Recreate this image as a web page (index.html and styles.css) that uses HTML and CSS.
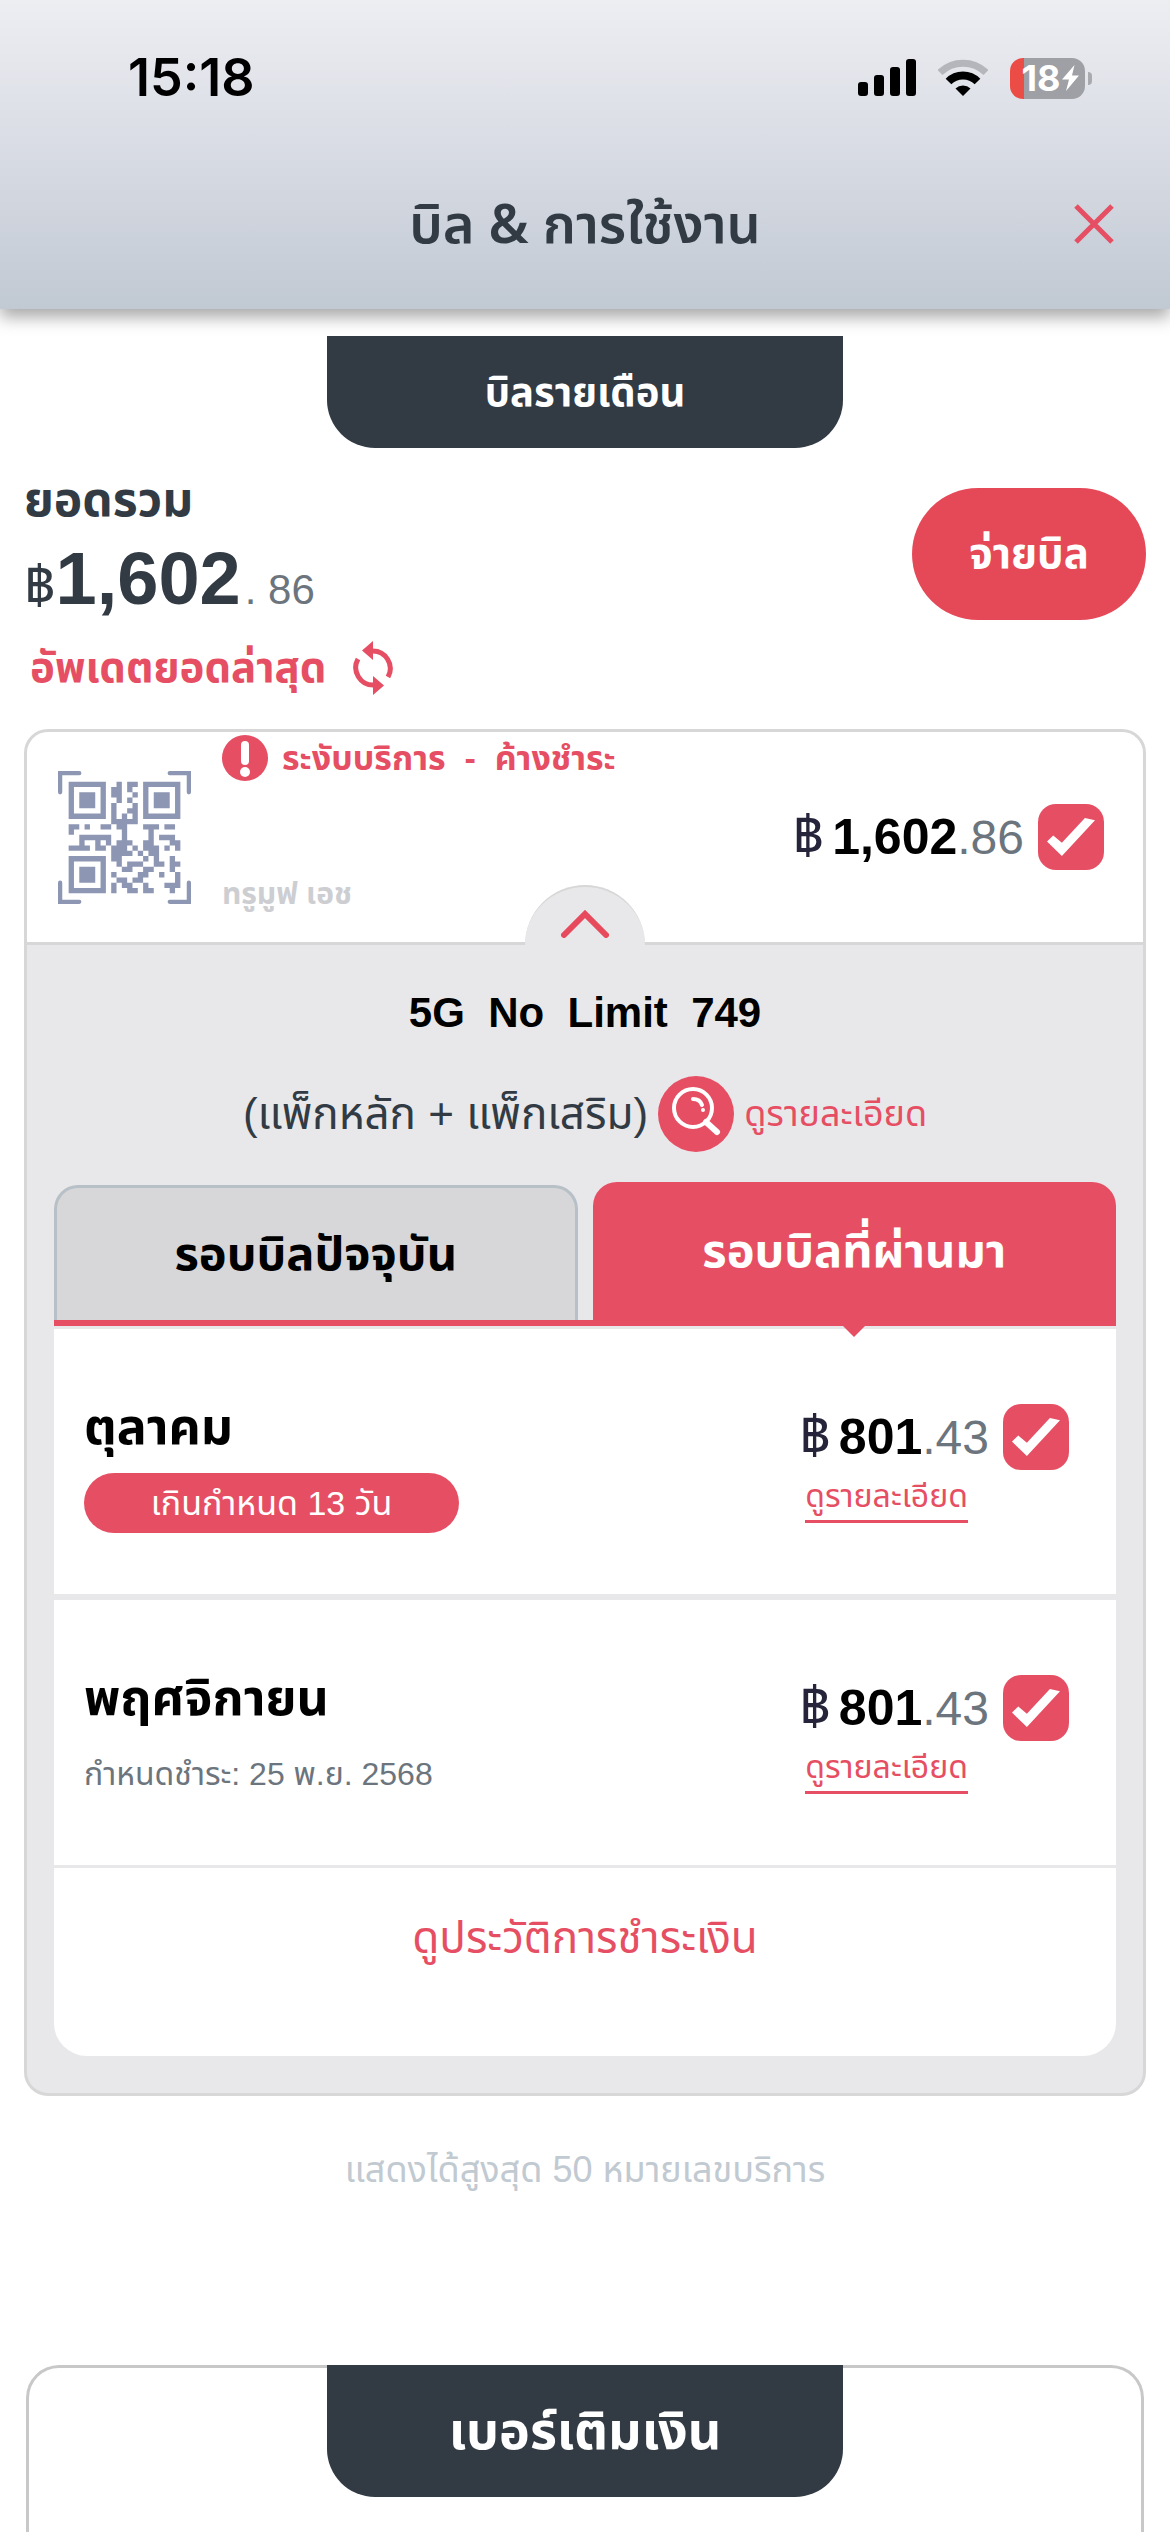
FILE: index.html
```html
<!DOCTYPE html>
<html lang="th">
<head>
<meta charset="utf-8">
<meta name="viewport" content="width=device-width, initial-scale=1">
<title>บิล &amp; การใช้งาน</title>
<link rel="stylesheet" href="styles.css">
</head>
<body>
<header class="header">
  <div class="status">
    <span class="status-time">15:18</span>
    <div class="status-icons">
      <svg width="58" height="38" viewBox="0 0 58 38" aria-hidden="true"><rect y="23" width="10" height="14" rx="3"/><rect x="16" y="16" width="10" height="21" rx="3"/><rect x="32" y="8" width="10" height="29" rx="3"/><rect x="48" width="10" height="37" rx="3"/></svg>
      <svg width="50" height="38" viewBox="0 0 50 38" fill="none" aria-hidden="true"><path d="M2 13.500a33 33 0 0 1 46 0" stroke="#b5b6bb" stroke-width="7"/><path d="M10.500 22.500a20.500 20.500 0 0 1 29 0" stroke="#000" stroke-width="8"/><path d="M17.500 29.500a11 11 0 0 1 15 0L25 37z" fill="#000"/></svg>
      <div class="battery"><span>18</span><svg width="17" height="26" viewBox="0 0 17 26" aria-hidden="true"><path d="M12.500 0 0 14.500h7L4 26 17 10.500h-7z" fill="#fff"/></svg></div>
    </div>
  </div>
  <div class="titlebar">
    <h1 class="title">บิล &amp; การใช้งาน</h1>
    <button class="close" type="button" aria-label="ปิด"><svg width="40" height="40" viewBox="0 0 40 40" aria-hidden="true"><path d="M2 2l36 36M38 2 2 38" stroke="#e64f63" stroke-width="5"/></svg></button>
  </div>
</header>

<main class="main">
  <h2 class="section-tab">บิลรายเดือน</h2>

  <section class="summary">
    <div class="summary-info">
      <div class="summary-label">ยอดรวม</div>
      <div class="summary-amount"><span class="baht">฿</span><b>1,602</b><span class="cents">. 86</span></div>
      <button class="refresh" type="button">อัพเดตยอดล่าสุด
        <svg width="42" height="54" viewBox="0 0 42 54" fill="none" aria-hidden="true"><path d="M20 10A17.500 17.500 0 0 1 36 36M6 18a17.500 17.500 0 0 0 16 26" stroke="#e64f63" stroke-width="5"/><path d="M21 0v19L10 9.500zM21 35v19l11-9.500z" fill="#e64f63"/></svg>
      </button>
    </div>
    <button class="pay" type="button">จ่ายบิล</button>
  </section>

  <section class="card">
    <div class="service">
      <svg class="qr" width="133" height="133" viewBox="0 0 25 25" fill="none" aria-label="QR">
        <path d="M.4 4V.4H4M21 .4h3.600V4M.4 21v3.600H4M21 24.600h3.600V21" stroke="#8d96b3" stroke-width=".8" stroke-linecap="round"/>
        <g transform="translate(2 2)" stroke="#8d96b3">
          <path d="M.5.5h6v6h-6zM14.500.5h6v6h-6zM.5 14.500h6v6h-6z"/>
          <path d="M2 3.500h3M16 3.500h3M2 17.500h3" stroke-width="3"/>
          <path d="M9 .5h1M11 .5h2M8 1.500h2M11 1.500h1M8 2.500h2M12 2.500h1M9 3.500h1M11 3.500h1M8 4.500h1M12 4.500h1M8 5.500h1M11 5.500h2M8 6.500h1M10 6.500h1M12 6.500h1M8 7.500h5M0 8.500h2M3 8.500h1M6 8.500h2M9 8.500h2M14 8.500h3M18 8.500h2M0 9.500h1M10 9.500h1M15 9.500h1M2 10.500h6M10 10.500h1M15 10.500h1M17 10.500h3M2 11.500h1M5 11.500h1M7 11.500h1M9 11.500h3M14 11.500h2M19 11.500h2M0 12.500h4M5 12.500h2M8 12.500h3M12 12.500h1M14 12.500h3M18 12.500h1M20 12.500h1M8 13.500h4M13 13.500h1M15 13.500h2M8 14.500h2M14 14.500h1M16 14.500h1M19 14.500h1M9 15.500h1M11 15.500h3M16 15.500h2M19 15.500h2M10 16.500h2M14 16.500h2M19 16.500h1M8 17.500h1M13 17.500h2M17 17.500h1M20 17.500h1M9 18.500h2M12 18.500h2M20 18.500h1M8 19.500h1M10 19.500h2M14 19.500h1M18 19.500h3M8 20.500h1M11 20.500h2M14 20.500h2M19 20.500h1"/>
        </g>
      </svg>
      <div class="service-info">
        <div class="alert">
          <svg width="46" height="46" viewBox="0 0 46 46" aria-hidden="true"><circle cx="23" cy="23" r="23" fill="#e64f63"/><rect x="19" y="6" width="8" height="24" rx="4" fill="#fff"/><circle cx="23" cy="37" r="5" fill="#fff"/></svg>
          <span>ระงับบริการ&nbsp; -&nbsp; ค้างชำระ</span>
        </div>
        <div class="brand">ทรูมูฟ เอช</div>
      </div>
      <label class="amount"><span class="amount-text"><span class="unit">฿</span><b>1,602</b><span class="dec">.86</span></span><input class="check" type="checkbox" checked></label>
      <button class="toggle" type="button" aria-label="ย่อ"><svg width="48" height="28" viewBox="0 0 48 28" fill="none" aria-hidden="true"><path d="M3 25 24 4l21 21" stroke="#e64a5c" stroke-width="6" stroke-linecap="round"/></svg></button>
    </div>

    <div class="detail">
      <h3 class="plan">5G&nbsp; No&nbsp; Limit&nbsp; 749</h3>
      <div class="pack">
        <span>(แพ็กหลัก + แพ็กเสริม)</span>
        <a class="pack-link" href="#pack"><svg width="76" height="76" viewBox="0 0 76 76" fill="none" aria-hidden="true"><circle cx="38" cy="38" r="38" fill="#e64f63"/><circle cx="35" cy="32" r="19" stroke="#fff" stroke-width="4"/><path d="M48 46l11 10" stroke="#fff" stroke-width="6" stroke-linecap="round"/><path d="M35 23c5 0 8 3 9 6" stroke="#fff" stroke-width="4" stroke-linecap="round"/><circle cx="45" cy="34" r="2" fill="#fff"/></svg><span>ดูรายละเอียด</span></a>
      </div>

      <div class="tabs" role="tablist">
        <button class="tab" type="button" role="tab" aria-selected="false">รอบบิลปัจจุบัน</button>
        <button class="tab tab-active" type="button" role="tab" aria-selected="true">รอบบิลที่ผ่านมา</button>
      </div>

      <ul class="bills">
        <li class="bill">
          <div class="bill-info"><h4 class="month">ตุลาคม</h4><span class="overdue">เกินกำหนด 13 วัน</span></div>
          <div class="bill-pay">
            <label class="amount"><span class="amount-text"><span class="unit">฿</span><b>801</b><span class="dec">.43</span></span><input class="check" type="checkbox" checked></label>
            <a class="more" href="#oct">ดูรายละเอียด</a>
          </div>
        </li>
        <li class="bill">
          <div class="bill-info"><h4 class="month">พฤศจิกายน</h4><span class="due">กำหนดชำระ: 25 พ.ย. 2568</span></div>
          <div class="bill-pay">
            <label class="amount"><span class="amount-text"><span class="unit">฿</span><b>801</b><span class="dec">.43</span></span><input class="check" type="checkbox" checked></label>
            <a class="more" href="#nov">ดูรายละเอียด</a>
          </div>
        </li>
      </ul>
      <a class="history" href="#history">ดูประวัติการชำระเงิน</a>
    </div>
  </section>

  <p class="note">แสดงได้สูงสุด 50 หมายเลขบริการ</p>

  <section class="prepaid">
    <h2 class="section-tab section-tab-large">เบอร์เติมเงิน</h2>
  </section>
</main>
</body>
</html>
```
FILE: styles.css
```css
:root {
  --red: #e64f63;
  --dark: #323b44;
  --grey: #6c757d;
  --panel: #e8e8ea;
  --line: #d7d7d7;
}

* { box-sizing: border-box; }

body {
  margin: 0;
  background: #fff;
  color: #000;
  font-family: "Liberation Sans", "Noto Sans Thai", sans-serif;
  font-size: 36px;
  line-height: 48px;
  overflow-x: hidden;
}

h1, h2, h3, h4, p, ul { margin: 0; padding: 0; }
ul { list-style: none; }
svg { display: block; flex: none; }
a { color: var(--red); text-decoration: none; }
button { margin: 0; padding: 0; border: 0; background: none; font: inherit; color: inherit; }

.header {
  background: linear-gradient(#edeef2, #dadde5 45%, #c1c9d3);
  box-shadow: 0 8px 16px rgba(0, 0, 0, 0.35);
}
.status {
  display: flex;
  justify-content: space-between;
  align-items: center;
  height: 156px;
  padding: 0 78px 0 128px;
}
.status-time { font-family: Inter, sans-serif; font-size: 52px; font-weight: 600; }
.status-icons { display: flex; align-items: center; gap: 22px; }
.battery {
  position: relative;
  display: flex;
  align-items: center;
  justify-content: center;
  gap: 2px;
  width: 75px;
  height: 41px;
  margin-right: 7px;
  padding-left: 6px;
  border-radius: 13px;
  background: linear-gradient(90deg, #eb4d46 14px, #9fa0a5 14px);
  color: #fff;
  font-family: Inter, sans-serif;
  font-size: 36px;
  font-weight: 700;
}
.battery::after {
  content: "";
  position: absolute;
  left: 78px;
  top: 14px;
  width: 4px;
  height: 13px;
  border-radius: 0 4px 4px 0;
  background: #a9aaaf;
}
.titlebar {
  display: grid;
  grid-template-columns: 1fr auto 1fr;
  align-items: center;
  height: 153px;
  padding: 0 56px 18px;
}
.title { grid-column: 2; padding-bottom: 4px; color: var(--dark); font-family: "Noto Sans", "Noto Sans Thai", sans-serif; font-size: 54px; font-weight: 600; line-height: 72px; }
.close { justify-self: end; }

.main { padding: 27px 24px 0; }

.section-tab {
  width: 516px;
  max-width: 100%;
  margin: 0 auto;
  padding: 32px 0;
  border-radius: 0 0 48px 48px;
  background: var(--dark);
  color: #fff;
  text-align: center;
  font-size: 40px;
  line-height: 48px;
}
.section-tab-large { padding: 36px 0; font-size: 52px; line-height: 60px; }

.summary {
  display: flex;
  justify-content: space-between;
  align-items: flex-start;
  padding-top: 24px;
}
.summary-label { padding-bottom: 6px; color: var(--dark); font-size: 48px; font-weight: 700; line-height: 56px; }
.summary-amount { height: 101px; color: var(--dark); line-height: 90px; font-size: 46px; }
.summary-amount b { font-size: 74px; }
.summary-amount .baht { font-size: 54px; }
.summary-amount .cents { color: var(--grey); margin-left: 4px; font-size: 42px; }
.refresh {
  display: flex;
  align-items: center;
  gap: 26px;
  padding: 6px;
  color: var(--red);
  font-size: 42px;
  font-weight: 700;
}
.pay {
  width: 234px;
  height: 132px;
  margin-top: 16px;
  border-radius: 66px;
  background: #e54958;
  color: #fff;
  font-size: 42px;
  font-weight: 700;
}

.card {
  margin-top: 28px;
  border: 3px solid var(--line);
  border-radius: 24px;
  background: var(--panel);
}
.service {
  position: relative;
  display: flex;
  align-items: center;
  height: 213px;
  padding: 0 39px 0 31px;
  border-bottom: 3px solid var(--line);
  border-radius: 21px 21px 0 0;
  background: #fff;
}
.service-info {
  flex: 1;
  align-self: stretch;
  display: flex;
  flex-direction: column;
  justify-content: space-between;
  padding: 2px 0 24px 31px;
}
.alert { display: flex; align-items: center; gap: 14px; color: var(--red); font-size: 34px; font-weight: 700; }
.brand { color: #cdced2; font-size: 30px; font-weight: 700; line-height: 48px; }
.toggle {
  position: absolute;
  left: calc(50% - 60px);
  bottom: -3px;
  display: grid;
  place-items: center;
  width: 120px;
  height: 60px;
  padding-top: 16px;
  border-top: 2px solid var(--line);
  border-radius: 60px 60px 0 0;
  background: var(--panel);
}

.amount { display: flex; align-items: center; gap: 14px; }
.amount-text { height: 66px; font-size: 46px; line-height: 66px; }
.amount-text b { font-size: 50px; }
.unit { margin-right: 8px; color: #25243b; font-size: 54px; line-height: 60px; }
.dec { color: var(--grey); font-size: 48px; }
.check {
  appearance: none;
  display: grid;
  place-items: center;
  width: 66px;
  height: 66px;
  margin: 0;
  border-radius: 18px;
  background: var(--red);
}
.check:checked::before {
  content: "";
  width: 48px;
  height: 38px;
  background: #fff;
  clip-path: polygon(0 62%, 13% 46%, 31% 65%, 79% 0, 100% 6%, 31% 100%);
}

.detail { padding: 40px 27px 37px; }
.plan { font-size: 42px; line-height: 56px; text-align: center; }
.pack { display: flex; justify-content: center; align-items: center; gap: 10px; margin-top: 35px; color: var(--dark); font-size: 44px; }
.pack-link { display: flex; align-items: center; gap: 10px; font-size: 36px; }

.tabs {
  display: grid;
  grid-template-columns: 1fr 1fr;
  gap: 15px;
  margin-top: 30px;
  border-bottom: 6px solid var(--red);
}
.tab {
  height: 135px;
  margin-top: 3px;
  border: 3px solid #b8c0c7;
  border-bottom: 0;
  border-radius: 24px 24px 0 0;
  background: #d7d7d9;
  font-size: 47px;
  font-weight: 700;
}
.tab-active {
  position: relative;
  height: 138px;
  margin-top: 0;
  border: 0;
  background: var(--red);
  color: #fff;
}
.tab-active::after {
  content: "";
  position: absolute;
  left: calc(50% - 12px);
  top: 100%;
  margin-top: 5px;
  border: 12px solid transparent;
  border-top-color: var(--red);
  border-bottom: 0;
}

.bills { display: grid; gap: 6px; padding-top: 3px; }
.bill {
  display: flex;
  justify-content: space-between;
  height: 265px;
  padding: 66px 47px 0 30px;
  background: #fff;
}
.month { font-size: 50px; line-height: 64px; }
.overdue {
  display: block;
  width: 375px;
  margin-top: 14px;
  border-radius: 30px;
  background: var(--red);
  color: #fff;
  text-align: center;
  font-size: 34px;
  line-height: 60px;
}
.due { display: block; margin-top: 14px; color: var(--grey); font-size: 32px; line-height: 60px; }
.bill-pay { padding-top: 9px; }
.more { display: inline-block; margin: 2px 0 0 6px; border-bottom: 3px solid var(--red); font-size: 32px; line-height: 48px; }
.history {
  display: block;
  margin-top: 3px;
  padding: 38px 0 86px;
  border-radius: 0 0 33px 33px;
  background: #fff;
  text-align: center;
  font-size: 44px;
  line-height: 64px;
}

.note { padding: 46px 0 50px; color: #c1c9d1; text-align: center; font-size: 36px; line-height: 56px; }

.prepaid {
  margin: 117px 2px 0;
  height: 167px;
  border: 3px solid #c8c8c8;
  border-bottom: 0;
  border-radius: 33px 33px 0 0;
}
.prepaid .section-tab { margin-top: -3px; }
```
